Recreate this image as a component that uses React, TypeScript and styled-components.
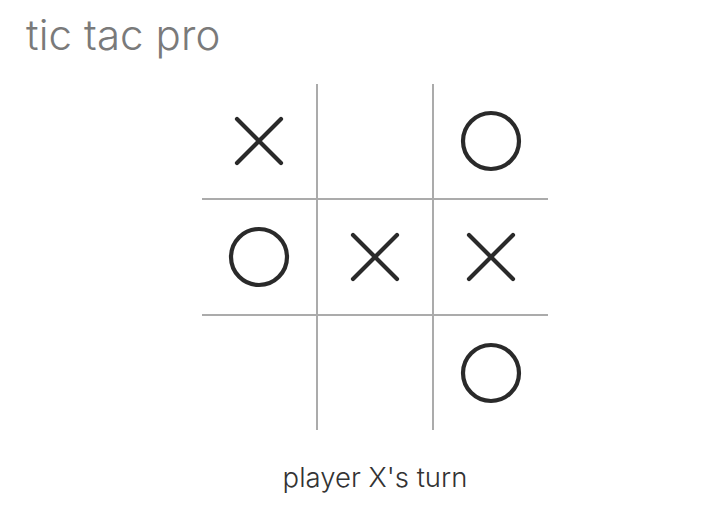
import React from "react";
import styled, { createGlobalStyle } from "styled-components";

type Mark = "X" | "O" | null;

const GlobalStyle = createGlobalStyle`
  body {
    margin: 0;
    background: #fff;
    font-family: Inter, "Liberation Sans", sans-serif;
  }
`;

const Page = styled.div`
  width: 720px;
  height: 520px;
  display: flex;
  flex-direction: column;
`;

const Title = styled.h1`
  margin: 0;
  padding: 9px 0 0 26px;
  height: 72px;
  box-sizing: border-box;
  font-size: 42px;
  font-weight: 300;
  color: #7a7a7a;
  letter-spacing: 0.1px;
`;

const Main = styled.main`
  display: flex;
  flex-direction: column;
  align-items: center;
  padding-left: 30px;
  margin-top: 12px;
`;

const Board = styled.div`
  display: grid;
  grid-template-columns: repeat(3, 114px);
  grid-template-rows: repeat(3, 114px);
  gap: 2px;
  background: #ababab;
`;

const Cell = styled.div`
  background: #fff;
  display: flex;
  align-items: center;
  justify-content: center;
`;

const Status = styled.p`
  margin: 30px 0 0;
  font-size: 27.5px;
  font-weight: 300;
  color: #333;
`;

const XMark = () => (
  <svg width="50" height="50" viewBox="0 0 50 50">
    <path d="M3 3 L47 47 M47 3 L3 47" stroke="#2a2a2a" strokeWidth="4.2" strokeLinecap="round" fill="none" />
  </svg>
);

const OMark = () => (
  <svg width="62" height="62" viewBox="0 0 62 62">
    <circle cx="31" cy="31" r="28" stroke="#2a2a2a" strokeWidth="4.2" fill="none" />
  </svg>
);

const cells: Mark[] = ["X", null, "O", "O", "X", "X", null, null, "O"];

export default function App() {
  return (
    <Page>
      <GlobalStyle />
      <Title>tic tac pro</Title>
      <Main>
        <Board>
          {cells.map((m, i) => (
            <Cell key={i}>{m === "X" ? <XMark /> : m === "O" ? <OMark /> : null}</Cell>
          ))}
        </Board>
        <Status>player X's turn</Status>
      </Main>
    </Page>
  );
}
